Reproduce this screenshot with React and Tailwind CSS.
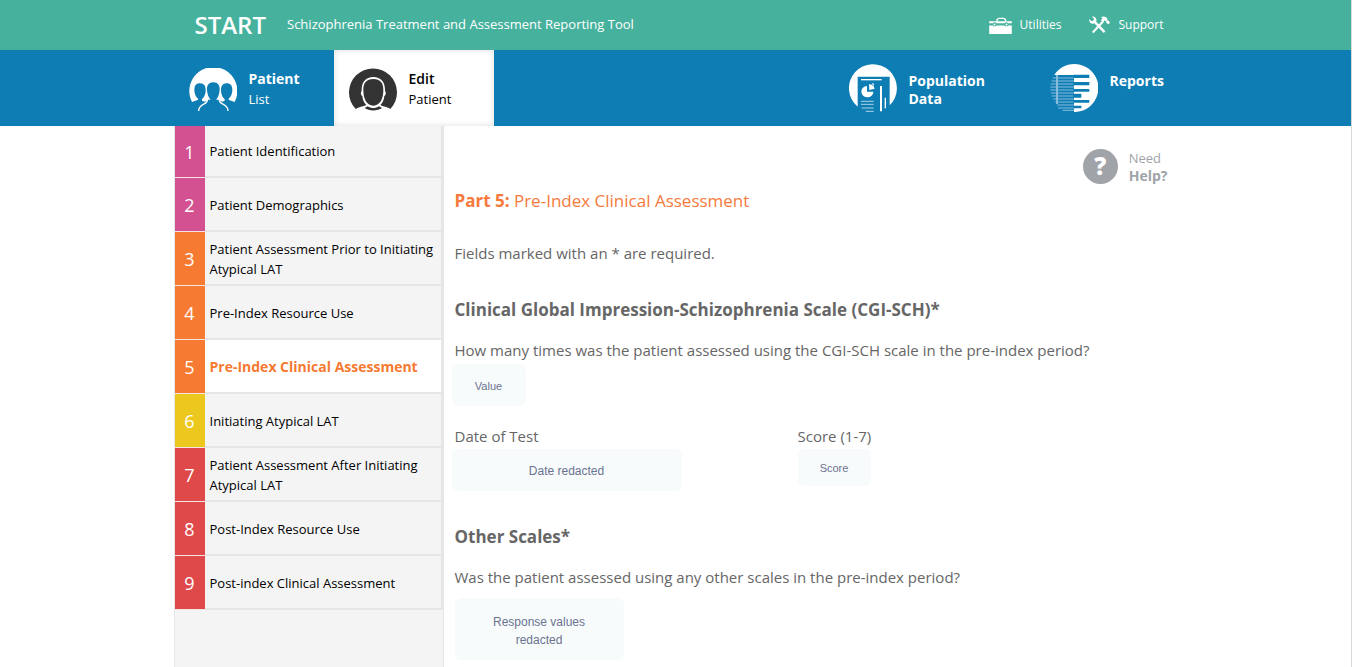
import clsx from 'clsx'

const sections = [
  { label: 'Patient Identification', color: 'bg-[#d45191]' },
  { label: 'Patient Demographics', color: 'bg-[#d45191]' },
  { label: 'Patient Assessment Prior to Initiating Atypical LAT', color: 'bg-[#f67a31]' },
  { label: 'Pre-Index Resource Use', color: 'bg-[#f67a31]' },
  { label: 'Pre-Index Clinical Assessment', color: 'bg-[#f67a31]', active: true },
  { label: 'Initiating Atypical LAT', color: 'bg-[#ecc81f]' },
  { label: 'Patient Assessment After Initiating Atypical LAT', color: 'bg-[#df494a]' },
  { label: 'Post-Index Resource Use', color: 'bg-[#df494a]' },
  { label: 'Post-index Clinical Assessment', color: 'bg-[#df494a]' },
]

const fieldClass =
  'block rounded-md bg-[#f7fbfc] text-center font-["Liberation_Sans",sans-serif] text-[#6b7390] outline-none'

function ToolboxIcon() {
  return (
    <svg viewBox="0 0 69 52" className="w-[23px] h-[17px] shrink-0" aria-hidden="true">
      <path d="M24 15V8l5-4h16l5 4v7" fill="none" stroke="#fff" strokeWidth="4" />
      <path d="M0 13h69v6H58a7 7 0 0 0-11 0H22a7 7 0 0 0-11 0H0z" fill="#fff" />
      <path d="M0 26h11a7 7 0 0 0 11 0h25a7 7 0 0 0 11 0h11v26H0z" fill="#fff" />
      <circle cx="16" cy="23" r="3" fill="#fff" />
      <circle cx="53" cy="23" r="3" fill="#fff" />
    </svg>
  )
}

function ToolsIcon() {
  return (
    <svg viewBox="0 0 62 52" className="w-[21px] h-[18px] shrink-0" aria-hidden="true">
      <path d="M16 16L46 47" stroke="#fff" strokeWidth="7" />
      <path d="M9 1l6 7-2 5-5 2-7-6c-2 8 4 14 12 13l9-8C23 6 17-1 9 1z" fill="#fff" />
      <path d="M11 48L42 15" stroke="#fff" strokeWidth="6" />
      <path d="M35 3c7-4 15-2 19 4l1 7 3-1 4 6-5 5-6-5v-4l-5-2-5 5-6-6 5-5c-1-3-3-3-5-4z" fill="#fff" />
    </svg>
  )
}

function PatientListIcon() {
  return (
    <svg viewBox="0 0 144 144" className="size-12 shrink-0" aria-hidden="true">
      <path d="M9 102A72 72 0 1 1 137 102L118 95L99 101L90 95H56L48 101L28 95z" fill="#fff" />
      <g fill="#0e7db3">
        <path d="M33 46C46 46 50 55 50 66C50 80 44 90 39 93V108H27V92C20 86 16 77 16 66C16 54 21 46 33 46z" />
        <path d="M113 46C100 46 96 55 96 66C96 80 102 90 107 93V108H119V92C126 86 130 77 130 66C130 54 125 46 113 46z" />
        <path d="M73 43C87 43 93 53 92 66C91 80 86 90 82 94V108H64V94C60 90 55 80 54 66C53 53 59 43 73 43z" />
      </g>
      <path
        d="M55 93c3 20-26 10-26 36M91 93c-3 20 26 10 26 36"
        fill="none"
        stroke="#fff"
        strokeWidth="4"
      />
    </svg>
  )
}

function PatientIcon() {
  return (
    <svg viewBox="0 0 144 144" className="size-12 shrink-0" aria-hidden="true">
      <path
        d="M20 123A72 72 0 1 1 124 123C117 117 101 116 94 111C102 103 105 94 106 84C112 80 111 72 108 68C109 43 96 27 73 27C50 27 37 43 38 68C35 72 34 80 40 84C41 94 44 103 52 111C44 116 28 117 20 123z"
        fill="#333"
      />
      <path d="M73 33C94 33 104 45 103 67C103 91 94 113 73 113C52 113 43 91 43 67C42 45 52 33 73 33z" fill="#333" />
      <path d="M56 115c10 7 24 7 34 0l9 5c-12 10-40 10-52 0z" fill="#333" />
    </svg>
  )
}

function PopulationIcon() {
  return (
    <svg viewBox="0 0 144 144" className="size-12 shrink-0" aria-hidden="true">
      <path d="M26 128A72 72 0 1 1 122 124V38H26z" fill="#fff" />
      <path d="M36 47h62" stroke="#fff" strokeWidth="4" />
      <path d="M54 66v17h19a18 17 0 1 1-19-17z" fill="#fff" />
      <path d="M60 61c9 0 15 5 17 13l-16 4zM68 57l7 2-1 8z" fill="#fff" />
      <path d="M96 66v76" stroke="#fff" strokeWidth="6" />
      <path d="M109 101v32" stroke="#fff" strokeWidth="4" />
      <path d="M36 112h38M36 121h38M38 132h36M50 142h24" stroke="#a9d3e8" strokeWidth="3" />
    </svg>
  )
}

function ReportsIcon() {
  return (
    <svg viewBox="0 0 144 144" className="size-12 shrink-0" aria-hidden="true">
      <path d="M17 27A72 72 0 1 1 72 144V33H13z" fill="#fff" />
      <path d="M21 33v87" stroke="#fff" strokeWidth="3" />
      <path
        d="M8 42h64M5 51h67M2 60h70M1 69h71M1 78h71M3 87h69M5 96h67M10 105h62M16 114h56M22 123h50M24 132h48M38 139h34"
        stroke="#84bbdf"
        strokeWidth="3"
      />
      <path d="M70 32h48v10H70zM70 54h48v10H70zM70 75h48v8H70zM70 89h24v12H70zM70 108h48v8H70zM70 125h24v8H70z" fill="#0e7db3" />
    </svg>
  )
}

function NavItem({ icon: Icon, title, sub, active, bold, className }) {
  return (
    <a
      href="#"
      className={clsx(
        'flex h-full pl-[15px] gap-3',
        active ? 'bg-white text-black shadow-[inset_0_0_6px_#dddddd]' : 'text-white',
        className
      )}
    >
      <Icon />
      <span className={clsx('flex flex-col', bold ? 'pt-2 text-sm leading-[18px]' : 'pt-px text-[13px] leading-5')}>
        <span className={clsx('text-sm', bold ? 'leading-[18px]' : 'leading-5', active ? 'font-semibold' : 'font-bold')}>
          {title}
        </span>
        {sub && <span className={clsx(bold && 'font-bold')}>{sub}</span>}
      </span>
    </a>
  )
}

function Header() {
  return (
    <header>
      <div className="bg-[#46b29d] text-white">
        <div className="max-w-[1004px] h-[50px] mx-auto pl-[21px] pr-[14px] flex items-center">
          <h1 className="text-2xl font-semibold">START</h1>
          <p className="ml-[21px] text-[13px] font-medium">Schizophrenia Treatment and Assessment Reporting Tool</p>
          <div className="ml-auto flex gap-7 text-xs">
            <a href="#" className="flex items-center gap-2"><ToolboxIcon /> Utilities</a>
            <a href="#" className="flex items-center gap-2"><ToolsIcon /> Support</a>
          </div>
        </div>
      </div>
      <div className="bg-[#0e7db3]">
        <nav className="max-w-[1004px] h-[76px] mx-auto flex">
          <NavItem icon={PatientListIcon} title="Patient" sub="List" className="w-40 pt-[18px]" />
          <NavItem icon={PatientIcon} title="Edit" sub="Patient" active className="w-40 pt-[18px]" />
          <div className="ml-auto flex">
            <NavItem icon={PopulationIcon} title="Population" sub="Data" bold className="w-[201px] pt-[14px]" />
            <NavItem icon={ReportsIcon} title="Reports" bold className="w-[143px] pt-[14px]" />
          </div>
        </nav>
      </div>
    </header>
  )
}

function Sidebar() {
  return (
    <aside className="w-[270px] shrink-0 bg-[#f4f4f4] border-x border-[#e6e6e6]">
      <ol>
        {sections.map(({ label, color, active }, i) => (
          <li key={label}>
            <a href="#" className={clsx('flex', i === 0 ? 'h-[52px]' : 'h-[54px]')}>
              <span
                className={clsx(
                  'w-[30px] shrink-0 flex items-center justify-center border-b border-[#f4e4e4] text-white text-lg',
                  color
                )}
              >
                {i + 1}
              </span>
              <span
                className={clsx(
                  'flex-1 flex items-center pl-[5px] border-b-2 border-r-2 border-[#e6e6e6] leading-5',
                  i > 0 && 'pt-px',
                  active ? 'bg-white text-[#f67a31] text-sm font-bold' : 'text-black text-[13px]'
                )}
              >
                {label}
              </span>
            </a>
          </li>
        ))}
      </ol>
    </aside>
  )
}

function HelpLink() {
  return (
    <a href="#" className="self-end flex items-center gap-[11px] leading-[18px] text-[#a0a3a8]">
      <span className="size-[35px] rounded-full bg-[#a0a3a8] text-white text-2xl font-extrabold flex items-center justify-center">
        ?
      </span>
      <span className="flex flex-col pt-[2px]">
        <span className="text-[13px]">Need</span>
        <span className="text-sm leading-[18px] font-bold">Help?</span>
      </span>
    </a>
  )
}

export default function App() {
  return (
    <div className='min-h-screen flex flex-col bg-white border-r border-[#d8d8d8] font-["Open_Sans",sans-serif]'>
      <Header />
      <div className="w-full max-w-[1004px] mx-auto flex-1 flex">
        <Sidebar />
        <main className="flex-1 flex flex-col pt-[21px] pl-[11px] pr-[10px] text-[15px] leading-5 text-[#666666]">
          <HelpLink />
          <h2 className="mt-1 text-[17px] leading-6 text-[#f67a3c]">
            <b>Part 5:</b> Pre-Index Clinical Assessment
          </h2>
          <p className="mt-[30px]">Fields marked with an * are required.</p>

          <h3 className="mt-[35px] text-[17px] leading-6 font-bold">
            Clinical Global Impression-Schizophrenia Scale (CGI-SCH)*
          </h3>
          <label htmlFor="cgi-count" className="mt-[18px]">
            How many times was the patient assessed using the CGI-SCH scale in the pre-index period?
          </label>
          <input id="cgi-count" readOnly defaultValue="Value" className={clsx(fieldClass, '-ml-[3px] mt-1 pt-[2px] w-[74px] h-[42px] text-[11px]')} />

          <div className="mt-5 flex">
            <div className="w-[343px]">
              <label htmlFor="test-date" className="block">Date of Test</label>
              <input id="test-date" readOnly defaultValue="Date redacted" className={clsx(fieldClass, '-ml-[3px] mt-[3px] pt-[2px] w-[230px] h-[42px] text-xs')} />
            </div>
            <div>
              <label htmlFor="score" className="block">Score (1-7)</label>
              <input id="score" readOnly defaultValue="Score" className={clsx(fieldClass, 'mt-[3px] w-[73px] h-[37px] text-[11px]')} />
            </div>
          </div>

          <h3 className="mt-[34px] text-[17px] leading-6 font-bold">Other Scales*</h3>
          <label htmlFor="other-scales" className="mt-[18px]">
            Was the patient assessed using any other scales in the pre-index period?
          </label>
          <textarea
            id="other-scales"
            readOnly
            rows={2}
            defaultValue={'Response values\nredacted'}
            className={clsx(fieldClass, 'mt-[11px] w-[169px] h-[62px] pt-[15px] resize-none overflow-hidden text-xs leading-[18px]')}
          />
        </main>
      </div>
    </div>
  )
}
